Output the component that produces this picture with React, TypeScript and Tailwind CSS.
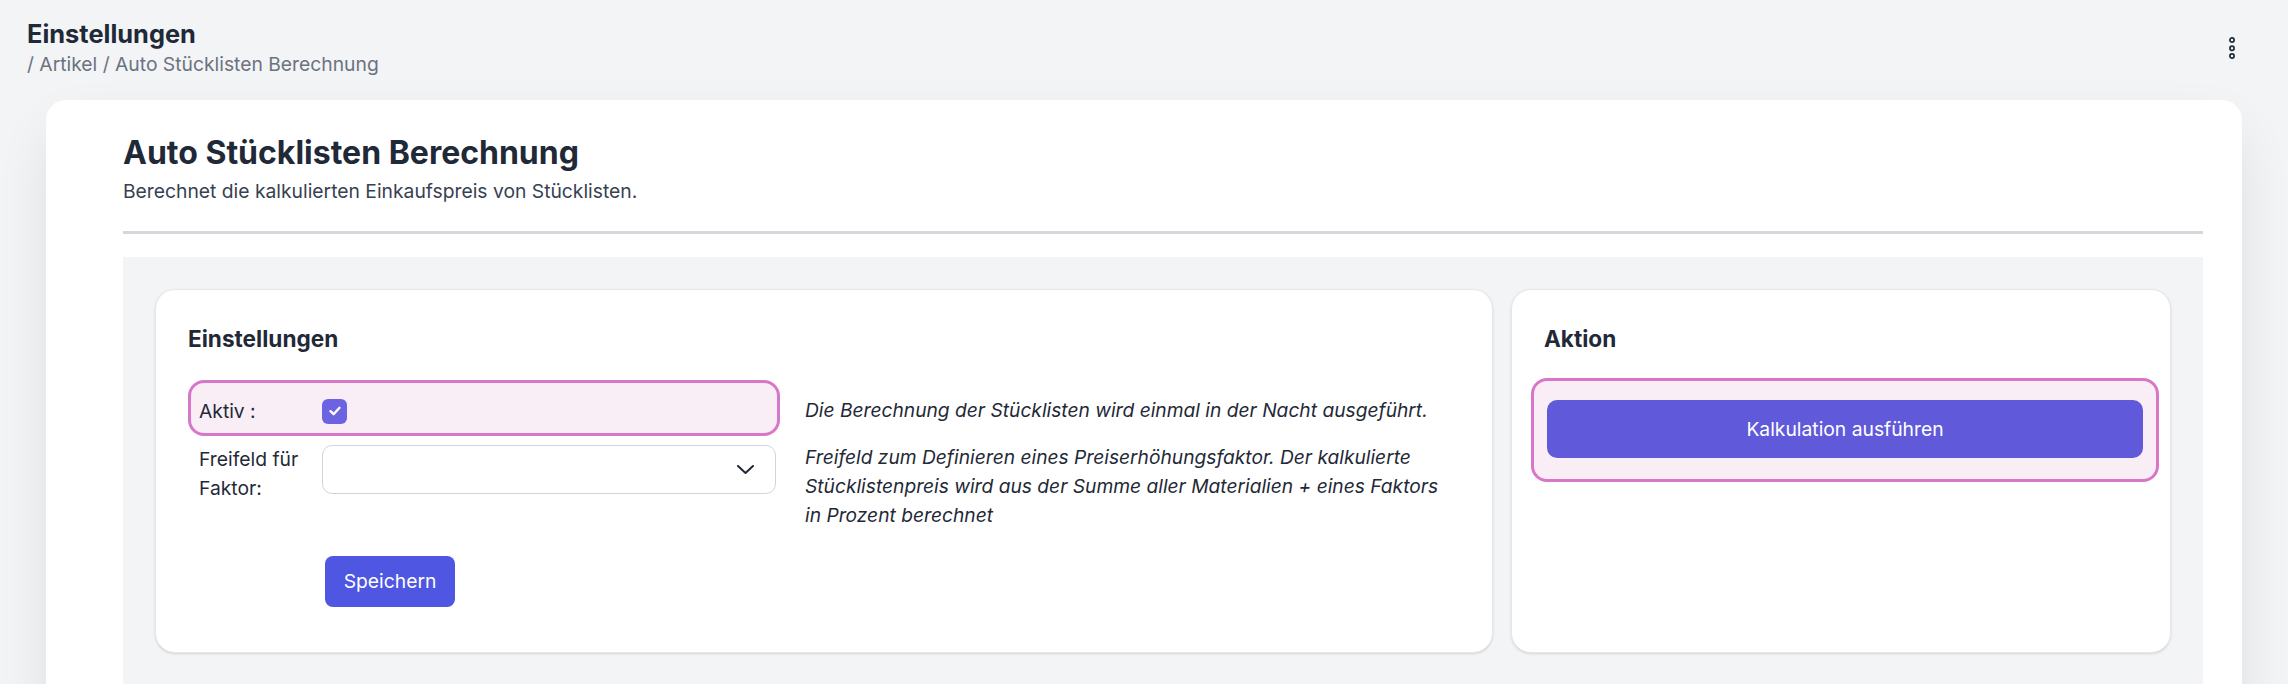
import React from "react";

function Dots() {
  return (
    <svg width="8" height="24" viewBox="0 0 8 24" fill="none" className="mt-[19px] shrink-0">
      <circle cx="4" cy="4" r="2.1" stroke="#1f2937" strokeWidth="1.7" />
      <circle cx="4" cy="12.3" r="2.1" stroke="#1f2937" strokeWidth="1.7" />
      <circle cx="4" cy="20" r="2.1" stroke="#1f2937" strokeWidth="1.7" />
    </svg>
  );
}

function Chevron() {
  return (
    <svg width="17" height="9" viewBox="0 0 17 9" fill="none">
      <path d="M1 1 L8.5 8 L16 1" stroke="#1f2937" strokeWidth="2" strokeLinecap="round" strokeLinejoin="round" />
    </svg>
  );
}

function Check() {
  return (
    <svg width="12" height="10" viewBox="0 0 12 10" fill="none">
      <path d="M1.5 5.2 L4.6 8.2 L10.5 1.8" stroke="white" strokeWidth="2.4" strokeLinecap="round" strokeLinejoin="round" />
    </svg>
  );
}

export default function App() {
  return (
    <div className="h-screen w-full overflow-hidden bg-[#f3f4f6] font-['Inter','Noto_Sans',sans-serif] text-[#1f2937]">
      <header className="flex justify-between pl-[27px] pr-[52px] pt-[17px]">
        <div>
          <h1 className="text-[25.4px] leading-[33px] font-bold text-[#1f2937]">Einstellungen</h1>
          <div className="text-[19.3px] leading-[29px] text-[#6b7280]">/ Artikel / Auto Stücklisten Berechnung</div>
        </div>
        <Dots />
      </header>

      <main className="mx-[46px] mt-[21px] rounded-[20px] bg-white pl-[77px] pr-[39px] pt-[33px] pb-[40px] shadow-[0_25px_60px_-10px_rgba(0,0,0,0.12)]">
        <h2 className="text-[32px] leading-[40px] font-bold text-[#1f2937]">Auto Stücklisten Berechnung</h2>
        <p className="mt-[4px] text-[19.3px] leading-[29px] text-[#374151]">
          Berechnet die kalkulierten Einkaufspreis von Stücklisten.
        </p>
        <div className="mt-[25px] h-[3px] bg-[#d4d8dd]" />

        <section className="mt-[23px] flex gap-[18px] bg-[#f3f4f6] p-[32px]">
          <div className="w-[1338px] shrink-0 rounded-[20px] border border-[#e5e7eb] bg-white pl-[32px] pt-[33px] pb-[45px] shadow-sm">
            <h3 className="text-[22.6px] leading-[32px] font-bold text-[#1f2937]">Einstellungen</h3>
            <div className="mt-[25px] flex">
              <div className="w-[592px] shrink-0">
                <div className="flex h-[56px] items-center rounded-[16px] border-[3px] border-[#d876c7] bg-[#f9eef6] pl-[8px] pt-[6px]">
                  <span className="w-[123px] text-[19.3px] leading-[29px] text-[#1f2937]">Aktiv :</span>
                  <span className="flex h-[25px] w-[25px] items-center justify-center rounded-[6px] bg-[#6c63e2]">
                    <Check />
                  </span>
                </div>
                <div className="mt-[9px] flex pl-[11px] pr-[4px]">
                  <span className="w-[123px] shrink-0 text-[19.3px] leading-[28.7px] text-[#1f2937]">
                    Freifeld für
                    <br />
                    Faktor:
                  </span>
                  <div className="flex h-[49px] flex-1 items-center justify-end rounded-[10px] border border-[#d1d5db] bg-white pr-[21px]">
                    <Chevron />
                  </div>
                </div>
                <button className="ml-[137px] mt-[54px] h-[51px] w-[130px] rounded-[8px] bg-[#4f56e1] text-[19.3px] text-white">
                  Speichern
                </button>
              </div>
              <div className="ml-[25px] w-[640px] pt-[16px] text-[19.2px] italic leading-[28.7px] text-[#1f2937]">
                <p>Die Berechnung der Stücklisten wird einmal in der Nacht ausgeführt.</p>
                <p className="mt-[18.6px]">
                  Freifeld zum Definieren eines Preiserhöhungsfaktor. Der kalkulierte Stücklistenpreis wird aus der Summe aller Materialien + eines Faktors in Prozent berechnet
                </p>
              </div>
            </div>
          </div>

          <div className="w-[660px] shrink-0 rounded-[20px] border border-[#e5e7eb] bg-white pt-[33px] shadow-sm">
            <h3 className="pl-[32px] text-[22.6px] leading-[32px] font-bold text-[#1f2937]">Aktion</h3>
            <div className="ml-[19px] mr-[11px] mt-[23px] rounded-[16px] border-[3px] border-[#d876c7] bg-[#f9eef6] px-[13px] pt-[19px] pb-[21px]">
              <button className="h-[58px] w-full rounded-[10px] bg-[#605adb] text-[19.3px] text-white">
                Kalkulation ausführen
              </button>
            </div>
          </div>
        </section>
      </main>
    </div>
  );
}
